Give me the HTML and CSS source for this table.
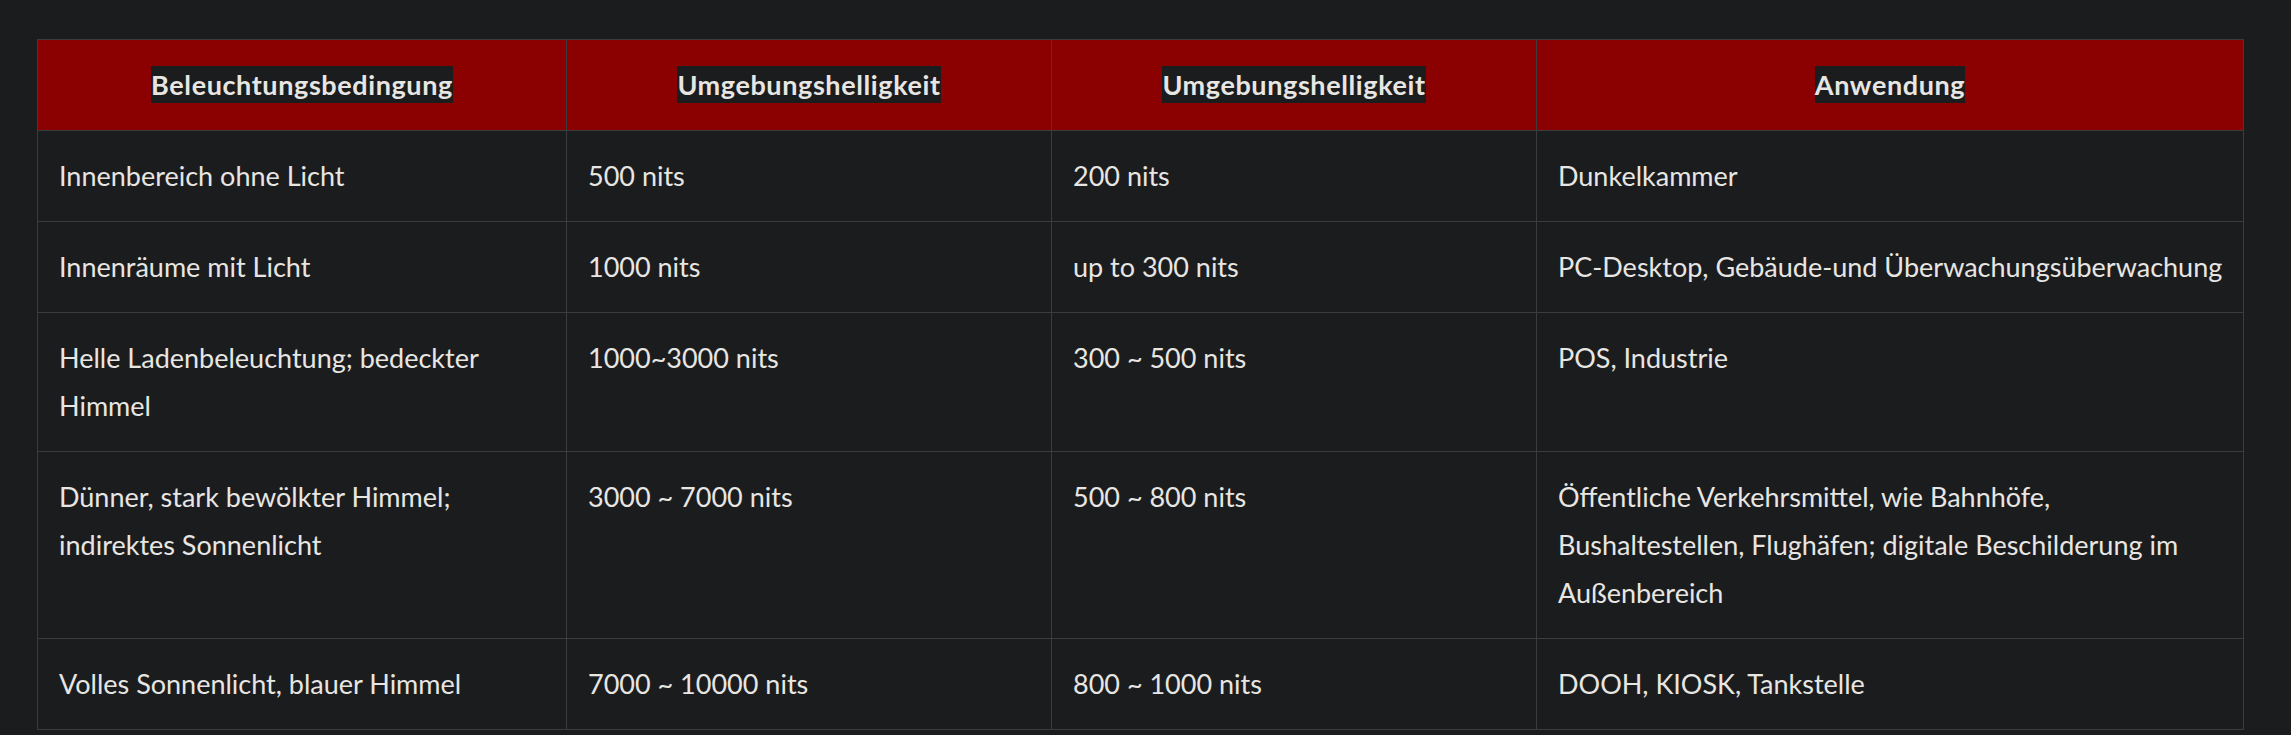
FILE: index.html
```html
<!DOCTYPE html>
<html>
<head>
  <meta charset="utf-8">
  <title>Umgebungshelligkeit</title>
  <link rel="stylesheet" href="styles.css">
</head>
<body>

  <!-- Tabelle: Helligkeit nach Lichtverhältnissen -->
  <table class="nits-table">
    <thead>
      <tr>
        <th class="col-a"><span class="mark">Beleuchtungsbedingung</span></th>
        <th class="col-b"><span class="mark">Umgebungshelligkeit</span></th>
        <th class="col-c"><span class="mark">Umgebungshelligkeit</span></th>
        <th class="col-d"><span class="mark">Anwendung</span></th>
      </tr>
    </thead>
    <tbody>
      <tr>
        <td>Innenbereich ohne Licht</td>
        <td>500 nits</td>
        <td>200 nits</td>
        <td>Dunkelkammer</td>
      </tr>
      <tr>
        <td>Innenräume mit Licht</td>
        <td>1000 nits</td>
        <td>up to 300 nits</td>
        <td>PC-Desktop, Gebäude-und Überwachungsüberwachung</td>
      </tr>
      <tr>
        <td>Helle Ladenbeleuchtung; bedeckter Himmel</td>
        <td>1000~3000 nits</td>
        <td>300 ~ 500 nits</td>
        <td>POS, Industrie</td>
      </tr>
      <tr>
        <td>Dünner, stark bewölkter Himmel; indirektes Sonnenlicht</td>
        <td>3000 ~ 7000 nits</td>
        <td>500 ~ 800 nits</td>
        <td>Öffentliche Verkehrsmittel, wie Bahnhöfe, Bushaltestellen, Flughäfen; digitale Beschilderung im Außenbereich</td>
      </tr>
      <tr>
        <td>Volles Sonnenlicht, blauer Himmel</td>
        <td>7000 ~ 10000 nits</td>
        <td>800 ~ 1000 nits</td>
        <td>DOOH, KIOSK, Tankstelle</td>
      </tr>
    </tbody>
  </table>

</body>
</html>
```

FILE: styles.css
```css
body {
  font-family: Lato, "Noto Sans", sans-serif;
  margin: 0;
  padding: 39px 48px 0 37px;
  background-color: #1b1c1e;
  color: #e8e6e3;
}

.nits-table {
  width: 2206px;
  border-collapse: collapse;
  table-layout: fixed;
  font-size: 27px;
  line-height: 48px;
}

.nits-table th,
.nits-table td {
  box-sizing: border-box;
  border: 1px solid #3a3d40;
  padding: 21px 10px 21px 21px;
  text-align: left;
  vertical-align: top;
}

.nits-table th {
  background-color: #8b0000;
  text-align: center;
  font-weight: bold;
  letter-spacing: 0.6px;
  padding-right: 21px;
}

.mark {
  background-color: #1b1c1e;
  padding: 2px 0;
}

.col-a { width: 529px; }
.col-b { width: 485px; }
.col-c { width: 485px; }
.col-d { width: 707px; }
```
